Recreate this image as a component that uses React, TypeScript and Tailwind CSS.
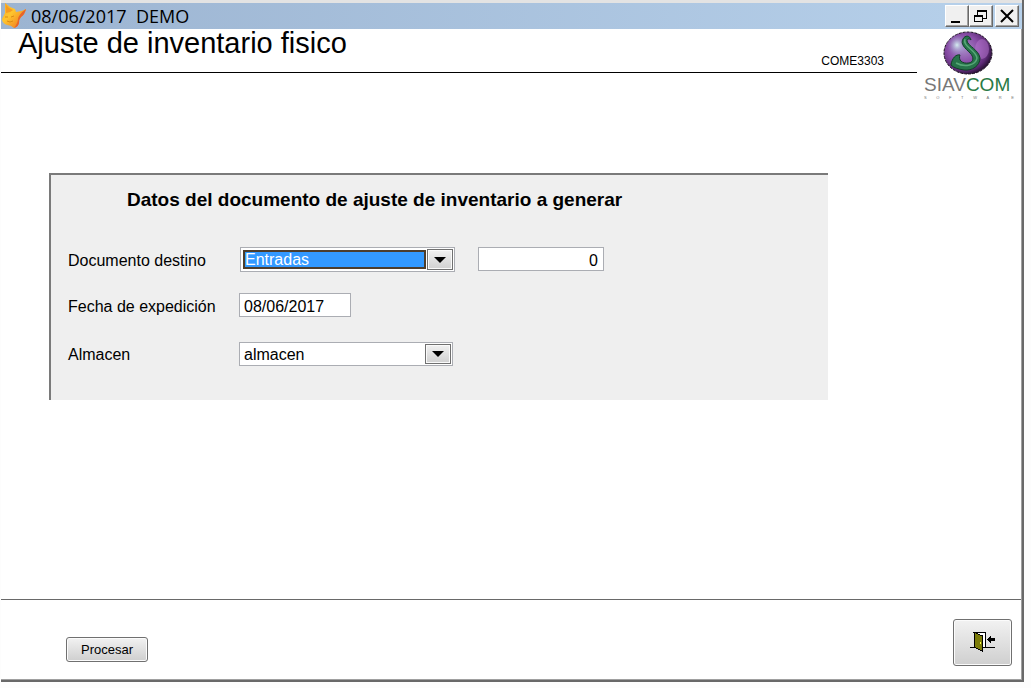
import { useState } from 'react';
import type { ReactNode } from 'react';
import clsx from 'clsx';

const DOCUMENTOS = ['Entradas', 'Salidas'];
const ALMACENES = ['almacen'];

function FoxIcon() {
  return (
    <svg width="26" height="26" viewBox="0 0 26 26" className="shrink-0" aria-hidden="true">
      <defs>
        <linearGradient id="fur" x1="0" y1="0" x2="1" y2="1">
          <stop offset="0" stopColor="#f9a825" />
          <stop offset="0.4" stopColor="#fec52e" />
          <stop offset="1" stopColor="#ec6a1c" />
        </linearGradient>
      </defs>
      <path d="M4 0 Q8 4 14 6 L15 9 Q20 9 25 6 Q24 11 20 14 Q18 16 18 20 Q17 24 13 25 Q10 22 6 22 Q1 20 1 16 L4 10 Z" fill="url(#fur)" />
      <path d="M5 2 Q8 6 12 7 L9 9 L5 10 Z" fill="#f79a1f" />
      <path d="M25 6 Q24 11 20 14 Q18 16 18 20 Q17 24 13 25 Q17 20 17 16 Q18 11 25 6 Z" fill="#e8642a" />
      <path d="M4 14 H7 M10 14 L13 13 M6 18 L9 19 L12 18" stroke="#d98a14" fill="none" />
    </svg>
  );
}

function Logo() {
  return (
    <div className="flex w-[90px] flex-col">
      <svg width="50" height="44" viewBox="0 0 50 44" className="ml-[19px]" aria-hidden="true">
        <defs>
          <radialGradient id="orb" cx="0.4" cy="0.4" r="0.65">
            <stop offset="0" stopColor="#a78cc8" />
            <stop offset="0.5" stopColor="#8a4fa8" />
            <stop offset="0.8" stopColor="#5d2a76" />
            <stop offset="1" stopColor="#1e0d28" />
          </radialGradient>
          <radialGradient id="shine" cx="0.5" cy="0.5" r="0.5">
            <stop offset="0" stopColor="#d5eef0" />
            <stop offset="1" stopColor="#8f7fc0" stopOpacity="0" />
          </radialGradient>
        </defs>
        <ellipse cx="25" cy="22" rx="24" ry="21" fill="url(#orb)" stroke="#1b1020" strokeWidth="1" strokeDasharray="3 1" />
        <ellipse cx="14" cy="14" rx="10" ry="11" fill="url(#shine)" />
        <ellipse cx="39" cy="18" rx="7" ry="10" fill="#b878cf" opacity="0.5" />
        {/* Serpent */}
        <path d="M8 34 C9 27 13 23 17 24 C15 29 19 33 26 32 C31 31 31 26 27 22 C22 17 17 13 20 8 C22 4 27 4 28 9 C26 7 24 8 24 10 C25 15 36 19 37 27 C37 35 29 40 21 39 C15 38 11 37 8 34 Z" fill="#27734a" stroke="#123f28" />
        <path d="M22 8 C19 15 33 19 34 27 C33 34 22 37 13 32" fill="none" stroke="#58a878" strokeWidth="1.5" />
      </svg>
      <div className="mt-0.5 text-[19px] leading-4 text-[#777]">
        SIAV<span className="text-[#2a7a45]">COM</span>
      </div>
      <div className="mt-[3px] flex justify-between text-[4px] leading-[4px] text-[#777]">
        {'SOFTWARE'.split('').map((c, i) => <span key={i}>{c}</span>)}
      </div>
    </div>
  );
}

function CaptionButton({ label, className, children }: { label: string; className?: string; children: ReactNode }) {
  return (
    <button
      aria-label={label}
      className={clsx('flex h-[22px] w-6 items-center justify-center border border-t-white border-l-white border-r-[#696969] border-b-[#696969] bg-[#f0f0f0] shadow-[inset_-1px_-1px_0_#a0a0a0]', className)}
    >
      <svg width="18" height="18" viewBox="0 0 18 18" fill="none" stroke="#000" shapeRendering="crispEdges" aria-hidden="true">
        {children}
      </svg>
    </button>
  );
}

type ComboProps = {
  id: string;
  options: string[];
  value: string;
  onChange: (v: string) => void;
  active?: boolean;
};

function Combo({ id, options, value, onChange, active }: ComboProps) {
  return (
    <div className={clsx('relative border border-[#abadb3] bg-white', active ? 'ml-px h-[25px] w-[215px] p-0.5' : 'h-6 w-[214px]')}>
      <select
        id={id}
        value={value}
        onChange={e => onChange(e.target.value)}
        className={clsx(
          'block h-full w-full appearance-none rounded-none text-base leading-4 outline-none',
          active ? 'border-2 border-[#4d3d2c] bg-[#3399ff] text-white' : 'bg-white pt-0.5 pl-1 text-black',
        )}
      >
        {options.map(o => <option key={o}>{o}</option>)}
      </select>
      {active && <span className="pointer-events-none absolute inset-y-0.5 right-7 w-0.5 bg-[#4d3d2c]" />}
      <span className="pointer-events-none absolute inset-y-0 right-0 w-7 bg-white p-px">
        <span className="flex h-full w-[26px] items-center justify-center border border-[#707070] bg-linear-to-b from-[#f1f1f1] to-[#d0d0d0] shadow-[inset_0_0_0_1px_#fafafa]">
          <svg width="12" height="6" viewBox="0 0 12 6" aria-hidden="true"><path d="M0 0 H12 L6 6 Z" /></svg>
        </span>
      </span>
    </div>
  );
}

export default function App() {
  const [documento, setDocumento] = useState('Entradas');
  const [numero, setNumero] = useState('0');
  const [fecha, setFecha] = useState('08/06/2017');
  const [almacen, setAlmacen] = useState('almacen');

  return (
    <div className="min-h-screen bg-[#fdfdfd] pr-[7px] pb-[6px] pl-px font-['Liberation_Sans',Arial,sans-serif] text-black">
      <div className="flex min-h-[calc(100vh-6px)] flex-col border-r-2 border-b-2 border-[#696969] bg-white shadow-[inset_-1px_-1px_0_#a0a0a0]">
        {/* Title bar */}
        <header className="flex h-[29px] items-center border-t-3 border-[#e3e3e3] bg-linear-to-r from-[#9cb4d1] to-[#b7d1eb] pr-[3px]">
          <FoxIcon />
          <span className="ml-1 flex-1 font-['Open_Sans'] text-lg leading-6 whitespace-pre">08/06/2017  DEMO</span>
          <CaptionButton label="Minimizar">
            <path d="M3 15 H12" strokeWidth="2" />
          </CaptionButton>
          <CaptionButton label="Restaurar">
            <path d="M5 3 H15 M5 4 H15 M5.5 3 V8 M14.5 3 V11.5 H11 M2 8 H11 M2 9 H11 M2.5 8 V15 M2 14.5 H11 M10.5 8 V15" />
          </CaptionButton>
          <CaptionButton label="Cerrar" className="ml-0.5">
            <path d="M3 3 L15 15 M15 3 L3 15" strokeWidth="2" shapeRendering="auto" />
          </CaptionButton>
        </header>

        {/* Form heading */}
        <div className="flex h-11 items-start pr-2">
          <div className="mr-[7px] flex h-11 flex-1 items-start justify-between border-b border-black pr-[33px] pl-[17px]">
            <h1 className="text-[29px] leading-7">Ajuste de inventario fisico</h1>
            <span className="mt-6 text-xs leading-4">COME3303</span>
          </div>
          <div className="pt-0.5"><Logo /></div>
        </div>

        <main className="flex-1 px-12 pt-[100px] pb-12">
          <section className="w-[779px] max-w-full border-t-2 border-l-2 border-t-[#7a7a7a] border-l-[#7a7a7a] bg-[#efefef] pt-[11px] pb-[34px] pl-[17px]">
            <h2 className="pl-[59px] text-[19px] leading-7 font-bold">Datos del documento de ajuste de inventario a generar</h2>
            <div className="mt-[33px] flex h-[25px] items-start">
              <label htmlFor="documento" className="w-[171px] text-base leading-7">Documento destino</label>
              <Combo id="documento" options={DOCUMENTOS} value={documento} onChange={setDocumento} active />
              <input
                aria-label="Numero de documento"
                value={numero}
                onChange={e => setNumero(e.target.value)}
                className="ml-[23px] h-6 w-[126px] border border-[#abadb3] bg-white px-[5px] pt-[3px] text-right text-base"
              />
            </div>
            <div className="mt-[21px] flex h-6 items-start">
              <label htmlFor="fecha" className="w-[171px] text-base leading-7">Fecha de expedición</label>
              <input
                id="fecha"
                value={fecha}
                onChange={e => setFecha(e.target.value)}
                className="h-6 w-28 border border-[#abadb3] bg-white px-1 pt-[3px] text-base"
              />
            </div>
            <div className="mt-[25px] flex h-6 items-start">
              <label htmlFor="almacen" className="w-[171px] text-base leading-[26px]">Almacen</label>
              <Combo id="almacen" options={ALMACENES} value={almacen} onChange={setAlmacen} />
            </div>
          </section>
        </main>

        <footer className="mr-px flex h-[81px] items-start justify-between border-t border-[#696969] pr-[9px] pl-[65px]">
          <button className="mt-[37px] h-[25px] w-[82px] rounded-[3px] border border-[#707070] bg-linear-to-b from-[#f2f2f2] to-[#cfcfcf] text-[13px] leading-4 shadow-[inset_0_0_0_1px_#fbfbfb]">
            Procesar
          </button>
          <button aria-label="Salir" className="mt-[19px] flex h-[47px] w-[59px] items-start justify-center rounded-[3px] border border-[#707070] bg-linear-to-b from-[#f2f2f2] to-[#cfcfcf] pt-[11px] shadow-[inset_0_0_0_1px_#fbfbfb]">
            <svg width="26" height="22" viewBox="0 0 26 22" shapeRendering="crispEdges" aria-hidden="true">
              <path d="M4 1.5 H15.5 V16 H5 Z" fill="#fff" stroke="#000" strokeWidth="1" />
              <path d="M0 16.5 H5 M12 16.5 H25" stroke="#000" />
              <path d="M4.5 1.5 L12.5 5 V20 L4.5 16.5 Z" fill="#7b7b08" stroke="#000" />
              <rect x="10" y="11" width="1" height="2" fill="#ffff40" />
              <path d="M17 8.5 L21 5 V7 H25 V10 H21 V12 Z" />
            </svg>
          </button>
        </footer>
      </div>
    </div>
  );
}
